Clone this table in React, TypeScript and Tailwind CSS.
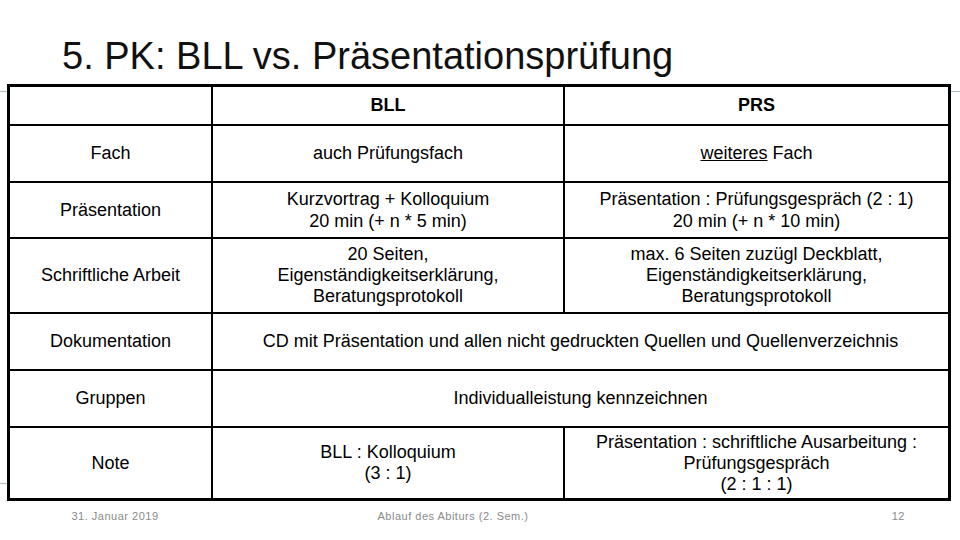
const rows = [
  { label: "Fach", bll: <>auch Prüfungsfach</>, prs: <><span className="underline">weiteres</span> Fach</>, h: "h-[55px]" },
  {
    label: "Präsentation",
    bll: <span className="leading-[22px]">Kurzvortrag + Kolloquium<br />20 min (+ n * 5 min)</span>,
    prs: <span className="leading-[22px]">Präsentation : Prüfungsgespräch (2 : 1)<br />20 min (+ n * 10 min)</span>,
    h: "h-[54px]",
  },
  {
    label: "Schriftliche Arbeit",
    bll: <span className="leading-[19.5px]">20 Seiten,<br />Eigenständigkeitserklärung,<br />Beratungsprotokoll</span>,
    prs: <span className="leading-[19.5px]">max. 6 Seiten zuzügl Deckblatt,<br />Eigenständigkeitserklärung,<br />Beratungsprotokoll</span>,
    h: "h-[73px]",
  },
];

function Cell({ children, className = "" }: { children?: React.ReactNode; className?: string }) {
  return (
    <div className={`bg-white flex items-center justify-center text-center ${className}`}>
      <div>{children}</div>
    </div>
  );
}

export default function App() {
  return (
    <div
      className="relative w-[960px] h-[540px] bg-white overflow-hidden text-black"
      style={{ fontFamily: '"Liberation Sans", Arial, sans-serif' }}
    >
      {/* template lines behind the table */}
      <div className="absolute left-0 right-0 top-[91px] h-px bg-[#a9bbc4]" />
      <div className="absolute left-0 w-[40px] top-[483px] h-px bg-[#a9bbc4]" />

      <div className="h-[84px] pl-[62px] pt-[37px]">
        <h1 className="text-[38px] leading-none text-[#111]">5. PK: BLL vs. Präsentationsprüfung</h1>
      </div>

      <div className="relative ml-[7px] w-[944px] border-[3px] border-black bg-black grid grid-cols-[201px_350px_383px] gap-[2px] text-[18px] leading-[21px]">
        <Cell className="h-[37px]" />
        <Cell className="h-[37px] font-bold">BLL</Cell>
        <Cell className="h-[37px] font-bold">PRS</Cell>

        {rows.map((r) => (
          <>
            <Cell key={r.label} className={r.h}>{r.label}</Cell>
            <Cell className={r.h}>{r.bll}</Cell>
            <Cell className={r.h}>{r.prs}</Cell>
          </>
        ))}

        <Cell className="h-[55px]">Dokumentation</Cell>
        <Cell className="h-[55px] col-span-2">
          CD mit Präsentation und allen nicht gedruckten Quellen und Quellenverzeichnis
        </Cell>

        <Cell className="h-[55px]">Gruppen</Cell>
        <Cell className="h-[55px] col-span-2">Individualleistung kennzeichnen</Cell>

        <Cell className="h-[70px]">Note</Cell>
        <Cell className="h-[70px]">
          <span className="leading-[21px]">BLL : Kolloquium<br />(3 : 1)</span>
        </Cell>
        <Cell className="h-[70px]">
          <span className="leading-[21px]">Präsentation : schriftliche Ausarbeitung :<br />Prüfungsgespräch<br />(2 : 1 : 1)</span>
        </Cell>
      </div>

      <div className="flex mt-[8px] text-[11px] leading-[14px] tracking-[0.5px] text-[#8a8a8a]">
        <div className="w-[230px] text-center">31. Januar 2019</div>
        <div className="w-[446px] text-center">Ablauf des Abiturs (2. Sem.)</div>
        <div className="flex-1 text-right pr-[55px]">12</div>
      </div>
    </div>
  );
}
